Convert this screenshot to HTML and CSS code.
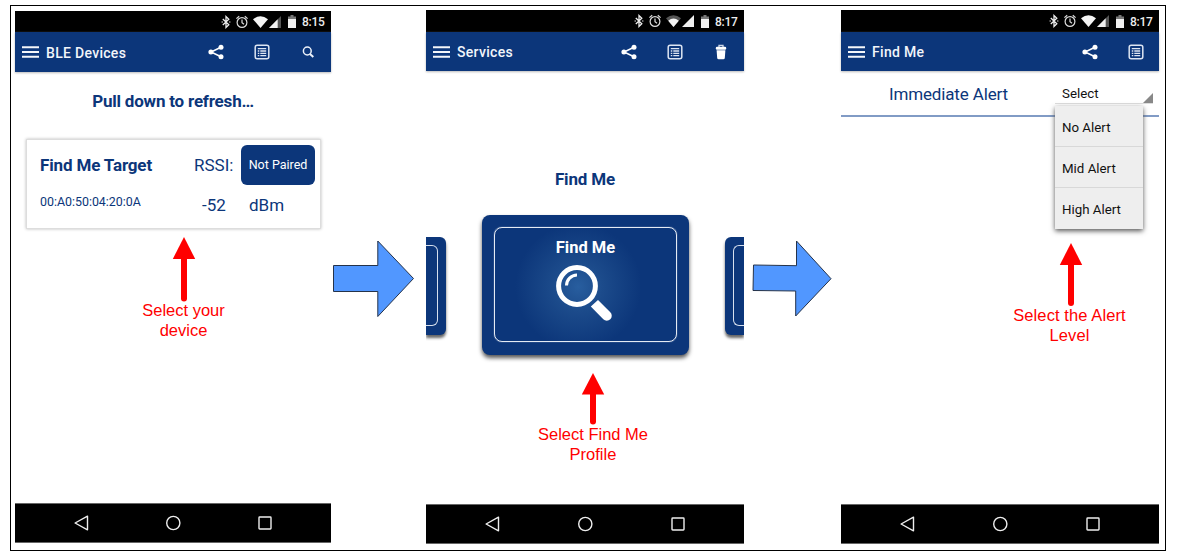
FILE: index.html
```html
<!DOCTYPE html>
<html lang="en">
<head>
<meta charset="utf-8">
<title>BLE Find Me</title>
<link rel="stylesheet" href="styles.css">
</head>
<body>
<svg class="defs" width="0" height="0">
  <symbol id="bt" viewBox="0 0 10 14"><path d="M1.8 4 L7.8 9.7 L5 12.4 V1.6 L7.8 4.3 L1.8 10" fill="none" stroke="#eee" stroke-width="1.3"/><circle cx="1.2" cy="7" r=".8" fill="#bbb"/><circle cx="8.8" cy="7" r=".8" fill="#bbb"/></symbol>
  <symbol id="alarm" viewBox="0 0 12 14"><circle cx="6" cy="7.5" r="4.900" fill="none" stroke="#ddd" stroke-width="1.2"/><path d="M6 4.600 V7.7 L8 9.200 M.4 3.6 L3.2 1.200 M11.600 3.6 L8.800 1.200" fill="none" stroke="#ddd" stroke-width="1.2"/></symbol>
  <symbol id="wifi" viewBox="0 0 15 12"><path d="M0 3.2 Q7.500 -2.500 15 3.200 L7.500 12Z" fill="#f4f4f4"/></symbol>
  <symbol id="wifi-mid" viewBox="0 0 15 12"><path d="M0 3.2 Q7.500 -2.500 15 3.200 L7.500 12Z" fill="#555"/><path d="M2.200 5.700 Q7.500 1.500 12.800 5.700 L7.500 12Z" fill="#f4f4f4"/></symbol>
  <symbol id="signal" viewBox="0 0 12 12"><path d="M0 12 L12 0 V12Z" fill="#555"/><path d="M0 12 L8.700 3.300 V12Z" fill="#f0f0f0"/></symbol>
  <symbol id="signal-full" viewBox="0 0 12 12"><path d="M0 12 L12 0 V12Z" fill="#f0f0f0"/></symbol>
  <symbol id="battery" viewBox="0 0 8 13"><path d="M2.500 0 H5.500 V1.500 H8 V4 H0 V1.500 H2.500Z" fill="#777"/><path d="M0 4 H8 V13 H0Z" fill="#f0f0f0"/></symbol>
  <symbol id="menu" viewBox="0 0 17 12"><path d="M0 1.300 H17 M0 6 H17 M0 10.700 H17" stroke="#f4f6fa" stroke-width="2"/></symbol>
  <symbol id="share" viewBox="0 0 16 16"><path d="M13 3.200 L3 8 L13 12.800" fill="none" stroke="#fff" stroke-width="1.500"/><circle cx="2.900" cy="8" r="2.500" fill="#fff"/><circle cx="13" cy="3.200" r="2.500" fill="#fff"/><circle cx="13" cy="12.800" r="2.500" fill="#fff"/></symbol>
  <symbol id="list" viewBox="0 0 16 16"><rect x="1.200" y="1.200" width="13.600" height="13.600" rx="2" fill="none" stroke="#dde5f2" stroke-width="1.500"/><path d="M3.800 4.600 H12.200 M3.800 7 H5.300 M6.300 7 H12.200 M3.800 9.300 H5.300 M6.300 9.300 H12.200 M3.800 11.600 H5.300 M6.300 11.600 H12.200" stroke="#dde5f2" stroke-width="1.300"/></symbol>
  <symbol id="search" viewBox="0 0 16 16"><circle cx="7.300" cy="7" r="3.900" fill="none" stroke="#edf2fa" stroke-width="1.500"/><path d="M10 10 L13.300 13" stroke="#edf2fa" stroke-width="2"/></symbol>
  <symbol id="trash" viewBox="0 0 16 16"><path d="M6 3 V1.300 H10 V3" fill="none" stroke="#ccd6e8" stroke-width="1.300"/><rect x="2.800" y="2.800" width="10.400" height="2.900" rx="1.300" fill="#fff"/><path d="M3.600 6.300 H12.400 L11.800 14 Q11.700 15.300 10.300 15.300 H5.700 Q4.300 15.300 4.200 14Z" fill="#fff"/></symbol>
  <symbol id="back" viewBox="0 0 16 16"><path d="M14.500 1.200 V14.800 L2.100 8Z" fill="none" stroke="#eee" stroke-width="1.400" stroke-linejoin="round"/></symbol>
  <symbol id="home" viewBox="0 0 16 16"><circle cx="8.300" cy="8" r="6.600" fill="none" stroke="#eee" stroke-width="1.400"/></symbol>
  <symbol id="recent" viewBox="0 0 16 16"><rect x="2" y="2" width="12" height="12" rx=".7" fill="none" stroke="#eee" stroke-width="1.400"/></symbol>
</svg>

<main class="frame">
  <section class="phone phone-devices">
    <div class="status">
      <svg class="i-bt"><use href="#bt"/></svg><svg class="i-alarm"><use href="#alarm"/></svg><svg class="i-wifi"><use href="#wifi"/></svg><svg class="i-signal"><use href="#signal"/></svg><svg class="i-battery"><use href="#battery"/></svg><span>8:15</span>
    </div>
    <header class="appbar">
      <svg class="menu"><use href="#menu"/></svg><h1>BLE Devices</h1>
      <i class="action"><svg><use href="#share"/></svg></i><i class="action"><svg><use href="#list"/></svg></i><i class="action"><svg><use href="#search"/></svg></i>
    </header>
    <div class="screen">
      <p class="refresh">Pull down to refresh…</p>
      <div class="device">
        <strong class="name">Find Me Target</strong><span class="rssi">RSSI:</span><span class="pair">Not Paired</span>
        <span class="mac">00:A0:50:04:20:0A</span><span class="value">-52</span><span class="unit">dBm</span>
      </div>
      <div class="note note-device">
        <svg width="24" height="66" viewBox="0 0 24 66"><path d="M12 0 L23.200 22 H.8Z" fill="red"/><path d="M12 20 V61.500" stroke="red" stroke-width="6" stroke-linecap="round"/></svg>
        <p>Select your<br>device</p>
      </div>
    </div>
    <nav class="nav"><svg><use href="#back"/></svg><svg><use href="#home"/></svg><svg><use href="#recent"/></svg></nav>
  </section>

  <svg class="next next-first" width="82" height="78" viewBox="0 0 82 78"><path d="M.5 25.500 H44.800 V1 L80.500 38.500 L44.800 76.500 V51.500 H.5Z" fill="#5197ff" stroke="#25334a" stroke-width="1"/></svg>

  <section class="phone phone-services">
    <div class="status">
      <svg class="i-bt"><use href="#bt"/></svg><svg class="i-alarm"><use href="#alarm"/></svg><svg class="i-wifi"><use href="#wifi-mid"/></svg><svg class="i-signal"><use href="#signal-full"/></svg><svg class="i-battery"><use href="#battery"/></svg><span>8:17</span>
    </div>
    <header class="appbar">
      <svg class="menu"><use href="#menu"/></svg><h1>Services</h1>
      <i class="action"><svg><use href="#share"/></svg></i><i class="action"><svg><use href="#list"/></svg></i><i class="action"><svg><use href="#trash"/></svg></i>
    </header>
    <div class="screen">
      <h2 class="profile">Find Me</h2>
      <div class="carousel">
        <div class="side side-left"><div></div></div>
        <div class="card"><div class="inner">
          <b>Find Me</b>
          <svg width="58" height="58" viewBox="0 0 58 58"><circle cx="22" cy="22" r="18.400" fill="none" stroke="#fff" stroke-width="5"/><path d="M11.500 21.500 A10.500 10.500 0 0 1 22 11" fill="none" stroke="#fff" stroke-width="3"/><path d="M43 36 L55.300 48.300 A4.900 4.900 0 0 1 48.300 55.300 L35.800 42.400Z" fill="#fff"/></svg>
        </div></div>
        <div class="side side-right"><div></div></div>
      </div>
      <div class="note note-profile">
        <svg width="24" height="53" viewBox="0 0 24 53"><path d="M12 0 L23.200 21.500 H.8Z" fill="red"/><path d="M12 20 V48.500" stroke="red" stroke-width="6" stroke-linecap="round"/></svg>
        <p>Select Find Me<br>Profile</p>
      </div>
    </div>
    <nav class="nav"><svg><use href="#back"/></svg><svg><use href="#home"/></svg><svg><use href="#recent"/></svg></nav>
  </section>

  <svg class="next next-second" width="80" height="78" viewBox="0 0 80 78"><path d="M1.500 25 L44.500 25.700 V1 L79 38.700 L43.700 76 V51 L1 50.500Z" fill="#5197ff" stroke="#25334a" stroke-width="1"/></svg>

  <section class="phone phone-alert">
    <div class="status">
      <svg class="i-bt"><use href="#bt"/></svg><svg class="i-alarm"><use href="#alarm"/></svg><svg class="i-wifi"><use href="#wifi"/></svg><svg class="i-signal"><use href="#signal"/></svg><svg class="i-battery"><use href="#battery"/></svg><span>8:17</span>
    </div>
    <header class="appbar">
      <svg class="menu"><use href="#menu"/></svg><h1>Find Me</h1>
      <i class="action"><svg><use href="#share"/></svg></i><i class="action"><svg><use href="#list"/></svg></i>
    </header>
    <div class="screen">
      <div class="alert-row">
        <span class="label">Immediate Alert</span>
        <div class="select"><span>Select</span><svg width="10" height="10" viewBox="0 0 10 10"><path d="M10 0 V10 H0Z" fill="#888"/></svg>
          <ul class="options"><li>No Alert</li><li>Mid Alert</li><li>High Alert</li></ul>
        </div>
      </div>
      <div class="note note-alert">
        <svg width="24" height="65" viewBox="0 0 24 65"><path d="M12 0 L23.200 22 H.8Z" fill="red"/><path d="M12 20 V60" stroke="red" stroke-width="6" stroke-linecap="round"/></svg>
        <p>Select the Alert<br>Level</p>
      </div>
    </div>
    <nav class="nav"><svg><use href="#back"/></svg><svg><use href="#home"/></svg><svg><use href="#recent"/></svg></nav>
  </section>
</main>
</body>
</html>
```
FILE: styles.css
```css
* { box-sizing: border-box; }
body { margin: 0; padding: 5px 0 0 10px; height: 555px; overflow: hidden; background: #fff; font-family: Roboto, sans-serif; color: #0c367a; }
h1, h2, p, ul { margin: 0; padding: 0; }
svg { display: block; flex: none; }
.defs { position: absolute; }
.frame { display: flex; align-items: flex-start; width: 1156px; height: 546px; border: 1px solid #000; }
.phone { display: flex; flex-direction: column; flex: none; width: 318px; height: 534px; margin-top: 4px; }
.phone-devices { width: 316px; height: 532px; margin: 5px 0 0 4px; }

.status { display: flex; align-items: center; justify-content: flex-end; flex: none; height: 22px; padding-right: 7px; background: #000; color: #eee; font-size: 12px; font-weight: 500; line-height: 22px; white-space: nowrap; }
.phone-devices .status { height: 21px; }
.status span { width: 22px; letter-spacing: -.3px; padding-top: 1px; }
.i-bt { width: 10px; height: 14px; margin-right: 5px; }
.i-alarm { width: 12px; height: 14px; margin-right: 5px; }
.i-wifi { width: 15px; height: 12px; margin-right: 1px; }
.i-signal { width: 12px; height: 12px; margin-right: 7px; }
.i-battery { width: 8px; height: 13px; margin-right: 6px; }

.appbar { display: flex; align-items: center; flex: none; height: 39px; padding-left: 7px; background: #0c367a; box-shadow: 0 1px 2px #bbb; }
.phone-devices .appbar { height: 40px; }
.menu { width: 17px; height: 12px; margin-right: 7px; }
.appbar h1 { flex: 1; padding-top: 1px; color: #f2f5fa; font-size: 14px; font-weight: 500; line-height: 20px; letter-spacing: .3px; white-space: nowrap; }
.action { display: flex; justify-content: center; width: 46px; }
.action svg { width: 16px; height: 16px; }

.screen { flex: 1; min-height: 0; }
.refresh { padding-top: 18px; text-align: center; font-size: 17px; font-weight: 700; line-height: 22px; letter-spacing: -.2px; }
.device { display: grid; grid-template-columns: 154px 47px 74px; grid-template-rows: 40px 40px; align-items: center; width: 295px; height: 90px; margin: 27px 0 0 11px; padding: 5px 0 0 13px; border: 1px solid #ddd; box-shadow: 0 0 3px #bbb; font-size: 17px; white-space: nowrap; }
.name { letter-spacing: -.15px; }
.pair { height: 40px; border-radius: 6px; background: #0c367a; color: #fff; font-size: 12.500px; line-height: 40px; text-align: center; }
.mac { font-size: 12.400px; padding-bottom: 7px; }
.value, .unit { padding-left: 8px; }

.note { display: flex; flex-direction: column; align-items: center; color: red; text-align: center; font: 16.500px/20px "Liberation Sans", sans-serif; }
.note-device { width: 120px; margin: 8px 0 0 109px; }
.note-profile { width: 140px; margin: 18px 0 0 97px; }
.note-alert { width: 140px; margin: 126px 0 0 160px; }
.note p { margin-top: -2px; white-space: nowrap; }
.note-device p { margin-top: -3px; padding-right: 1px; }
.note-alert p { margin-top: -3px; padding-right: 3px; letter-spacing: .1px; }

.profile { padding-top: 97px; text-align: center; font-size: 17px; font-weight: 700; line-height: 22px; letter-spacing: -.15px; }
.carousel { display: flex; justify-content: space-between; align-items: center; height: 140px; margin-top: 25px; }
.card { width: 207px; height: 140px; padding: 12px; border-radius: 8px; background: #0c367a; box-shadow: 0 3px 4px #555; }
.inner { display: flex; flex-direction: column; align-items: center; height: 115px; padding-top: 9px; border: 1.500px solid #e5ebf4; border-radius: 8px; background: radial-gradient(circle at 46% 52%, #285e9f 0, #1c4b8b 24px, #0c367a 63px); box-shadow: 0 0 1px #e5ebf4; color: #fff; font-size: 16.500px; line-height: 22px; }
.inner svg { margin: 5px 3px 0 0; }
.side { width: 20px; height: 98px; margin-top: 2px; padding: 8px 0; background: #0c367a; box-shadow: 0 3px 3px #666; clip-path: inset(0 -5px -7px 0); }
.side div { height: 81px; border: 1px solid #d6dfed; }
.side-left { border-radius: 0 6px 6px 0; padding-right: 8px; }
.side-left div { border-left: 0; border-radius: 0 6px 6px 0; }
.side-right { width: 19px; border-radius: 6px 0 0 6px; padding-left: 8px; clip-path: inset(0 0 -7px -5px); }
.side-right div { border-right: 0; border-radius: 6px 0 0 6px; }

.next-first { margin: 234px 11px 0 2px; }
.next-second { margin: 234px 9px 0 8px; }

.alert-row { display: flex; height: 46px; padding-left: 48px; border-bottom: 2px solid #819bc5; }
.label { width: 166px; padding-top: 12px; font-size: 17px; line-height: 22px; letter-spacing: -.15px; white-space: nowrap; }
.select { position: relative; display: flex; justify-content: space-between; align-items: flex-end; width: 98px; height: 33px; padding-left: 7px; border-bottom: 1px solid #ddd; color: #111; font-size: 13.300px; line-height: 18px; }
.options { position: absolute; left: 0; top: 35px; width: 88px; list-style: none; background: #eee; box-shadow: 0 2px 5px #555; }
.options li { height: 41px; padding-left: 7px; border-bottom: 1px solid #d8d8d8; line-height: 43px; }
.options li:last-child { border: 0; }

.nav { display: flex; align-items: center; justify-content: center; flex: none; gap: 77px; height: 40px; background: #000; border: solid #666; border-width: 1px 0; }
.phone-devices .nav { gap: 76px; }
.nav svg { width: 16px; height: 16px; }
```
